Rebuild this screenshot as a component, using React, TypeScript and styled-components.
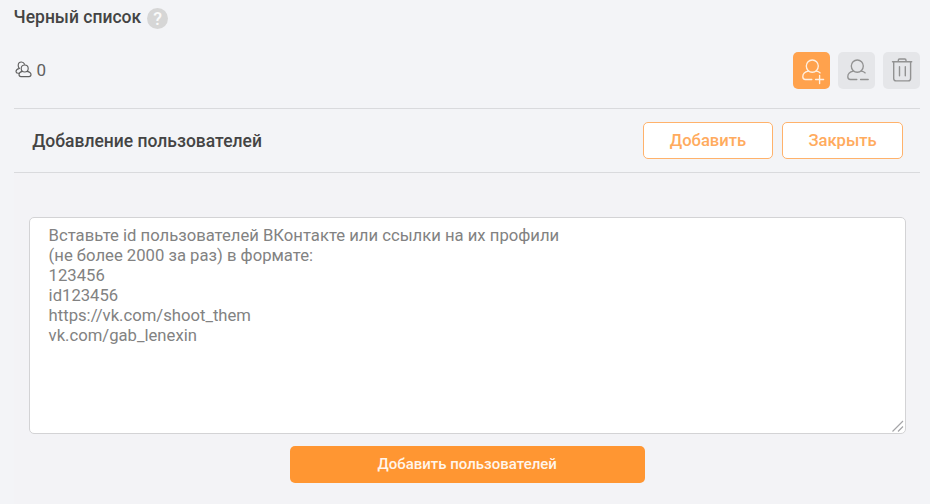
import React from 'react';
import styled, { createGlobalStyle } from 'styled-components';

const GlobalStyle = createGlobalStyle`
  * { box-sizing: border-box; }
  body { margin: 0; background: #f3f4f7; font-family: Roboto, sans-serif; color: #444; }
  button, textarea { font-family: inherit; }
`;

const Page = styled.main`
  width: 930px;
  height: 504px;
  padding: 0 9.6px 0 13.6px;
  display: flex;
  flex-direction: column;
  overflow: hidden;
`;

const TitleRow = styled.header`
  display: flex;
  align-items: center;
  gap: 6px;
  height: 34px;
  flex: none;
`;

const Title = styled.h1`
  margin: 0;
  font-size: 17.5px;
  line-height: 20px;
  font-weight: 500;
`;

const Help = styled.span`
  width: 21px;
  height: 21px;
  margin-top: 2px;
  border-radius: 50%;
  background: #d6d6d6;
  color: #fafafa;
  font-size: 18px;
  font-weight: 500;
  line-height: 22px;
  text-align: center;
`;

const Toolbar = styled.div`
  height: 75px;
  padding-bottom: 1px;
  flex: none;
  display: flex;
  align-items: center;
  justify-content: space-between;
  border-bottom: 1px solid #d9dadd;
`;

const Counter = styled.div`
  display: flex;
  align-items: center;
  gap: 5px;
  padding: 0 0 2px 1px;
  font-size: 17px;
  line-height: 20px;
  color: #606060;
`;

const Tools = styled.div`
  display: flex;
  gap: 8px;
`;

const IconButton = styled.button<{ $active?: boolean }>`
  width: 37px;
  height: 37px;
  padding: 0;
  border: 0;
  border-radius: 5px;
  background: ${({ $active }) => ($active ? '#ffa24d' : '#e5e6e9')};
  color: ${({ $active }) => ($active ? '#fff0e2' : '#929292')};
  svg { display: block; }
`;

const SectionHead = styled.div`
  height: 64px;
  flex: none;
  display: flex;
  align-items: center;
  justify-content: space-between;
  padding: 0 17.6px 0 18.6px;
  border-bottom: 1px solid #d9dadd;
`;

const SectionTitle = styled.h2`
  margin: 0;
  font-size: 17.5px;
  line-height: 20px;
  font-weight: 500;
`;

const Actions = styled.div`
  display: flex;
  gap: 9.6px;
`;

const OutlineButton = styled.button<{ $width: number }>`
  width: ${({ $width }) => $width}px;
  height: 37px;
  padding: 0;
  border: 1px solid #ffb26b;
  border-radius: 5px;
  background: #fff;
  color: #ffab5e;
  font-size: 16.6px;
  font-weight: 500;
`;

const Body = styled.section`
  flex: 1;
  display: flex;
  flex-direction: column;
  align-items: center;
  padding: 44px 14.6px 0 15px;
  background: #f3f3f6;
`;

const Field = styled.div`
  position: relative;
  width: 100%;
  height: 217px;
`;

const TextArea = styled.textarea`
  display: block;
  width: 100%;
  height: 100%;
  padding: 8px 19px;
  border: 1px solid #d3d3d5;
  border-radius: 5px;
  background: #fff;
  resize: none;
  outline: none;
  font-size: 16.67px;
  line-height: 20px;
  &::placeholder { color: #828282; opacity: 1; }
`;

const Grip = styled.svg`
  position: absolute;
  right: 2px;
  bottom: 2px;
  pointer-events: none;
`;

const SubmitButton = styled.button`
  width: 355px;
  height: 37px;
  margin-top: 12px;
  padding: 0 0 1px;
  border: 0;
  border-radius: 5px;
  background: #ff9632;
  color: #fff5eb;
  font-size: 15px;
  font-weight: 500;
`;

const hint = [
  'Вставьте id пользователей ВКонтакте или ссылки на их профили',
  '(не более 2000 за раз) в формате:',
  '123456',
  'id123456',
  'https://vk.com/shoot_them',
  'vk.com/gab_lenexin',
].join('\n');

const stroke = { fill: 'none', stroke: 'currentColor', strokeLinecap: 'round', strokeLinejoin: 'round' } as const;

const UsersIcon = () => (
  <svg width="17" height="17" viewBox="0 0 17 17" {...stroke} strokeWidth="1.15">
    <circle cx="9.7" cy="7.5" r="3.5" />
    <path d="M7.3 10.4C5 11 4 11.900 4 13.600q0 2 2 2h8q2 0 2-2c0-1.600-1.300-2.600-3.900-3.200" />
    <path d="M9.600 3.200C8.900 1.700 7.800 1 6.500 1 4.600 1 3.200 2.500 3.200 4.400c0 1.300.5 2.300 1.300 3C2.200 8 1 9 1 10.500c0 1.200.7 1.700 2 1.700h1" />
  </svg>
);

const UserIcon = ({ plus = false }: { plus?: boolean }) => (
  <svg width="37" height="37" viewBox="0 0 37 37" {...stroke} strokeWidth="1.35">
    <ellipse cx="19.300" cy="14.100" rx="6" ry="6.100" />
    <path d="M15.300 19.200c-3.600.7-5.500 2.500-5.500 5.500 0 1.800.8 2.800 2.600 2.800h6.400M23.300 19.200c1.600.3 2.900.8 3.900 1.700" />
    {plus ? <path d="M22.600 27.500h8M26.600 23.500v8" /> : <path d="M22.600 27.500h7.600" />}
  </svg>
);

const TrashIcon = () => (
  <svg width="37" height="37" viewBox="0 0 37 37" {...stroke} strokeWidth="1.400">
    <path d="M9.500 9.800h19.200M15.300 9.600V8.200q0-1.200 1.200-1.200h5.300q1.200 0 1.200 1.200v1.400M10.700 10v16.500q0 2.400 2.400 2.400h12.100q2.400 0 2.400-2.400V10M16.500 14.700v9.100M22.300 14.700v9.100" />
  </svg>
);

export default function App() {
  return (
    <>
      <GlobalStyle />
      <Page>
        <TitleRow>
          <Title>Черный список</Title>
          <Help>?</Help>
        </TitleRow>
        <Toolbar>
          <Counter>
            <UsersIcon />
            <span>0</span>
          </Counter>
          <Tools>
            <IconButton $active aria-label="Добавить"><UserIcon plus /></IconButton>
            <IconButton aria-label="Убрать"><UserIcon /></IconButton>
            <IconButton aria-label="Очистить"><TrashIcon /></IconButton>
          </Tools>
        </Toolbar>
        <SectionHead>
          <SectionTitle>Добавление пользователей</SectionTitle>
          <Actions>
            <OutlineButton $width={129.4}>Добавить</OutlineButton>
            <OutlineButton $width={120.6}>Закрыть</OutlineButton>
          </Actions>
        </SectionHead>
        <Body>
          <Field>
            <TextArea placeholder={hint} />
            <Grip width="12" height="12" viewBox="0 0 12 12" fill="none" stroke="#a5a5a8" strokeWidth="1.2">
              <path d="M0.500 11.500L11 1M6 11.500l5-5" />
            </Grip>
          </Field>
          <SubmitButton>Добавить пользователей</SubmitButton>
        </Body>
      </Page>
    </>
  );
}
